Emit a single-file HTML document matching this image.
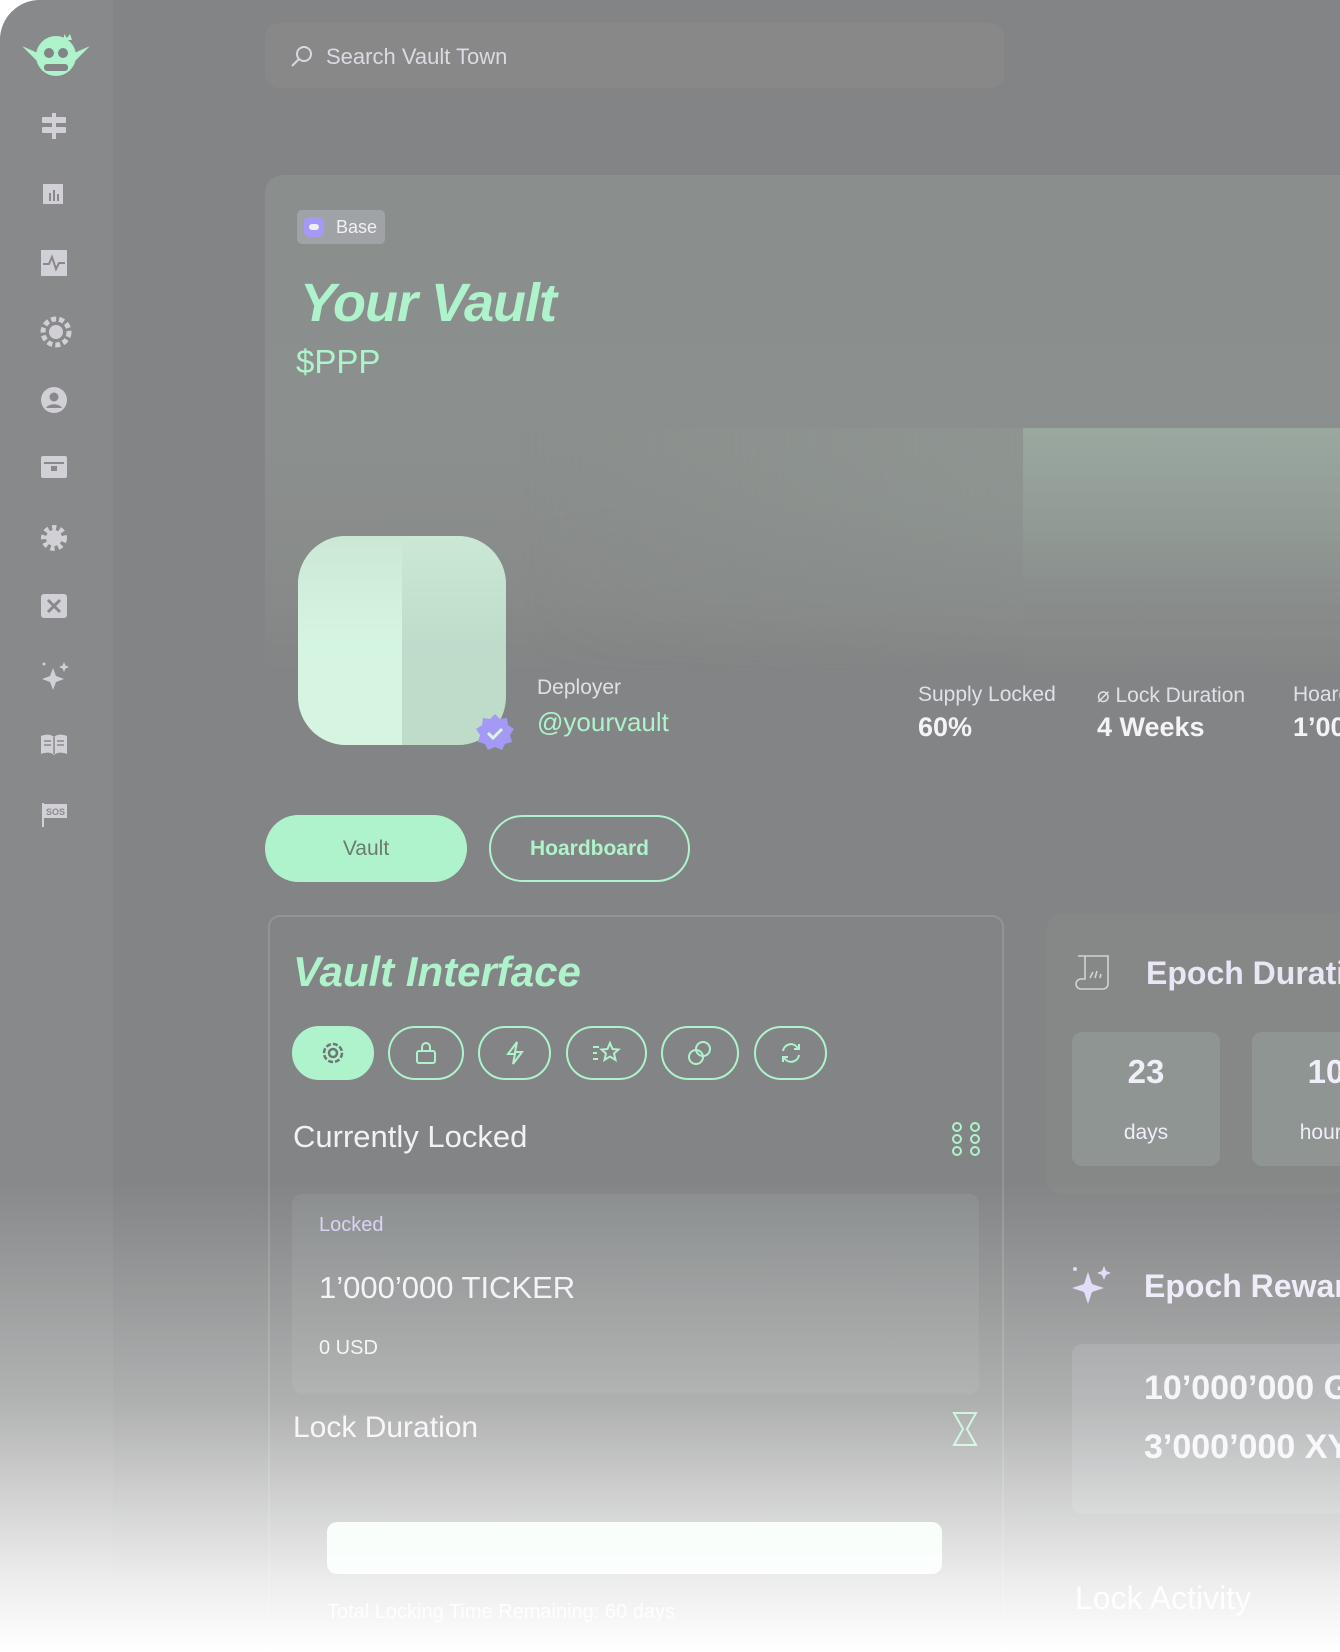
<!DOCTYPE html>
<html><head><meta charset="utf-8"><style>
*{margin:0;padding:0;box-sizing:border-box}
body{width:1340px;height:1652px;overflow:hidden;background:#fff;font-family:"Liberation Sans",sans-serif;position:relative}
.page{position:absolute;left:0;top:0;width:1340px;height:1652px;background:#838485;border-radius:40px 0 0 0;overflow:hidden}
.side{position:absolute;left:0;top:0;width:113px;height:1652px;background:#88898a}
.abs{position:absolute;white-space:nowrap}
.g{color:#aef3cb}
.w{color:#e4e4ec}
.pill{position:absolute;top:1026px;height:54px;border:2px solid #aef3cb;border-radius:27px;display:flex;align-items:center;justify-content:center}
.side svg{position:absolute;left:40px}
.fade{position:absolute;left:0;top:0;width:1340px;height:1652px;background:linear-gradient(to bottom,rgba(255,255,255,0) 0,rgba(255,255,255,0) 1180px,rgba(255,255,255,.35) 1400px,rgba(255,255,255,.85) 1580px,#fff 1652px)}
</style></head><body>
<div class="page">
<div class="side">
<svg style="left:20px;top:26px" width="72" height="54" viewBox="0 0 72 54"><path d="M2 20 L20 28 L22 40 Z M70 20 L52 28 L50 40 Z" fill="#aef3cb"/><circle cx="36" cy="30" r="20" fill="#aef3cb"/><circle cx="29" cy="27" r="5" fill="#838485"/><circle cx="43" cy="27" r="5" fill="#838485"/><rect x="24" y="38" width="24" height="7" rx="3" fill="#838485"/><path d="M44 8 l3 4 3-4 2 6h-8z" fill="#aef3cb"/></svg>
<svg style="top:112px" width="28" height="28" viewBox="0 0 28 28" fill="#d0d0d6"><rect x="2" y="5" width="24" height="6" rx="1"/><rect x="2" y="15" width="24" height="6" rx="1"/><rect x="12" y="1" width="4" height="26"/></svg>
<svg style="top:181px" width="28" height="28" viewBox="0 0 28 28" fill="#d0d0d6"><path d="M3 3h20v20H3z"/><rect x="9" y="12" width="2" height="8" fill="#88898a"/><rect x="13" y="9" width="2" height="11" fill="#88898a"/><rect x="17" y="13" width="2" height="7" fill="#88898a"/></svg>
<svg style="top:249px" width="28" height="28" viewBox="0 0 28 28"><rect x="1" y="1" width="26" height="26" fill="#d0d0d6"/><path d="M3 15h6l3-7 4 12 3-6h6" stroke="#88898a" stroke-width="2" fill="none"/></svg>
<svg style="top:316px" width="32" height="32" viewBox="0 0 32 32"><circle cx="16" cy="16" r="13" fill="none" stroke="#d0d0d6" stroke-width="5" stroke-dasharray="5 3"/><circle cx="16" cy="16" r="7" fill="#d0d0d6"/></svg>
<svg style="top:386px" width="28" height="28" viewBox="0 0 28 28"><circle cx="14" cy="14" r="13" fill="#d0d0d6"/><circle cx="14" cy="11" r="4.5" fill="#88898a"/><path d="M6 22c3-5 13-5 16 0" fill="#88898a"/></svg>
<svg style="top:454px" width="28" height="26" viewBox="0 0 28 26"><rect x="1" y="2" width="26" height="22" rx="2" fill="#d0d0d6"/><rect x="4" y="8" width="20" height="2" fill="#88898a"/><rect x="11" y="12" width="6" height="5" fill="#88898a"/></svg>
<svg style="top:524px" width="28" height="28" viewBox="0 0 28 28"><circle cx="14" cy="14" r="10" fill="none" stroke="#d0d0d6" stroke-width="6" stroke-dasharray="4 3.5"/><circle cx="14" cy="14" r="8" fill="#d0d0d6"/></svg>
<svg style="top:592px" width="28" height="28" viewBox="0 0 28 28"><rect x="1" y="2" width="26" height="24" rx="3" fill="#d0d0d6"/><path d="M8 8l12 12M20 8L8 20" stroke="#88898a" stroke-width="3"/></svg>
<svg style="top:660px" width="30" height="30" viewBox="0 0 30 30" fill="#d0d0d6"><path d="M13 8l3 8 8 3-8 3-3 8-3-8-8-3 8-3z"/><path d="M24 2l1.5 3.5L29 7l-3.5 1.5L24 12l-1.5-3.5L19 7l3.5-1.5z"/><circle cx="4" cy="4" r="1.5"/></svg>
<svg style="top:733px" width="28" height="24" viewBox="0 0 28 24"><path d="M1 3c5-2 10-2 13 1 3-3 8-3 13-1v18c-5-2-10-2-13 1-3-3-8-3-13-1z" fill="#d0d0d6"/><path d="M14 4v17M4 8h7M4 12h7M17 8h7M17 12h7" stroke="#88898a" stroke-width="1.5"/></svg>
<svg style="top:800px" width="28" height="28" viewBox="0 0 28 28"><rect x="2" y="3" width="2" height="24" fill="#d0d0d6"/><rect x="3" y="4" width="24" height="14" fill="#d0d0d6"/><text x="6" y="15" font-size="9" font-family="Liberation Sans" font-weight="bold" fill="#88898a">SOS</text></svg>
</div>

<div class="abs" style="left:265px;top:23px;width:739px;height:65px;background:#888889;border-radius:14px"></div>
<svg class="abs" style="left:290px;top:44px" width="24" height="24" viewBox="0 0 24 24"><circle cx="14" cy="10" r="7" fill="none" stroke="#d8d8e0" stroke-width="2"/><path d="M9 15l-7 7" stroke="#d8d8e0" stroke-width="2"/></svg>
<div class="abs w" style="left:326px;top:44px;font-size:22px;color:#dadae2">Search Vault Town</div>

<div class="abs" style="left:265px;top:175px;width:1075px;height:500px;border-radius:18px 0 0 0;background:linear-gradient(180deg,#8a8f8d 0,#8b8f8d 55%,#878a89 85%,#838485 100%)"></div>
<div class="abs" style="left:1023px;top:428px;width:317px;height:245px;background:linear-gradient(180deg,#9aa8a0 0,#929c96 35%,#888b8a 75%,rgba(131,132,133,0) 100%)"></div>
<div class="abs" style="left:520px;top:428px;width:503px;height:245px;background:linear-gradient(90deg,rgba(146,156,150,0) 0,rgba(146,156,150,.5) 100%);-webkit-mask:linear-gradient(180deg,#000 0,#000 30%,transparent 100%);mask:linear-gradient(180deg,#000 0,#000 30%,transparent 100%)"></div>

<div class="abs" style="left:297px;top:210px;width:88px;height:34px;background:#a0a3a6;border-radius:5px"></div>
<div class="abs" style="left:304px;top:217px;width:20px;height:20px;background:#a49af5;border-radius:5px"></div>
<div class="abs" style="left:309px;top:224px;width:10px;height:6px;background:#eee;border-radius:3px"></div>
<div class="abs" style="left:336px;top:217px;font-size:18px;color:#f0f0f4">Base</div>
<div class="abs g" style="left:300px;top:272px;font-size:54px;font-weight:bold;font-style:italic;letter-spacing:-1px">Your Vault</div>
<div class="abs g" style="left:296px;top:343px;font-size:33px">$PPP</div>

<div class="abs" style="left:298px;top:536px;width:208px;height:209px;border-radius:48px;background:linear-gradient(90deg,#d5f5e2 0,#d5f5e2 50%,#bfdccb 50%,#bfdccb 100%)"></div>
<div class="abs" style="left:298px;top:536px;width:208px;height:110px;border-radius:48px 48px 0 0;background:linear-gradient(180deg,#cbe8d6,rgba(203,232,214,0))"></div>
<svg class="abs" style="left:474px;top:712px" width="42" height="42" viewBox="0 0 42 42"><path d="M21 2l5 5 7-1 1 7 6 4-4 6 2 7-7 2-3 6-7-3-7 3-3-6-7-2 2-7-4-6 6-4 1-7 7 1z" fill="#a49af5"/><path d="M14 21l5 5 9-9" stroke="#d8f5e6" stroke-width="3" fill="none"/></svg>
<div class="abs" style="left:537px;top:676px;font-size:21px;color:#e0e0e8">Deployer</div>
<div class="abs g" style="left:537px;top:707px;font-size:26px">@yourvault</div>
<div class="abs" style="left:918px;top:683px;font-size:21px;color:#e0e0e8">Supply Locked</div>
<div class="abs" style="left:918px;top:712px;font-size:27px;color:#f4f4f8;font-weight:bold">60%</div>
<div class="abs" style="left:1097px;top:683px;font-size:21px;color:#e0e0e8">⌀ Lock Duration</div>
<div class="abs" style="left:1097px;top:712px;font-size:27px;color:#f4f4f8;font-weight:bold">4 Weeks</div>
<div class="abs" style="left:1293px;top:683px;font-size:21px;color:#e0e0e8">Hoard</div>
<div class="abs" style="left:1293px;top:712px;font-size:27px;color:#f4f4f8;font-weight:bold">1’000</div>

<div class="abs" style="left:265px;top:815px;width:202px;height:67px;border-radius:34px;background:#aef3cb;color:#6d7a74;font-size:21px;display:flex;align-items:center;justify-content:center">Vault</div>
<div class="abs g" style="left:489px;top:815px;width:201px;height:67px;border-radius:34px;border:2px solid #aef3cb;font-size:21px;display:flex;align-items:center;justify-content:center;font-weight:bold">Hoardboard</div>

<div class="abs" style="left:268px;top:915px;width:736px;height:760px;border:2px solid #8f9793;border-radius:12px"></div>
<div class="abs g" style="left:293px;top:948px;font-size:42px;font-weight:bold;font-style:italic">Vault Interface</div>
<div class="pill" style="left:292px;width:82px;background:#aef3cb"><svg width="28" height="28" viewBox="0 0 28 28"><circle cx="14" cy="14" r="9" fill="none" stroke="#6e7572" stroke-width="2.5" stroke-dasharray="5 2"/><circle cx="14" cy="14" r="4" fill="none" stroke="#6e7572" stroke-width="2.5"/></svg></div>
<div class="pill" style="left:388px;width:76px"><svg width="26" height="26" viewBox="0 0 26 26" fill="none" stroke="#aef3cb" stroke-width="2"><rect x="4" y="11" width="18" height="12" rx="2"/><path d="M9 11V7a4 4 0 018 0v4"/></svg></div>
<div class="pill" style="left:478px;width:73px"><svg width="26" height="26" viewBox="0 0 26 26" fill="none" stroke="#aef3cb" stroke-width="2"><path d="M15 2L6 14h7l-2 10 9-12h-7z"/></svg></div>
<div class="pill" style="left:566px;width:81px"><svg width="32" height="26" viewBox="0 0 32 26" fill="none" stroke="#aef3cb" stroke-width="2"><path d="M19 3l2.5 6 6 .5-4.5 4 1.5 6.5-5.5-3.5-5.5 3.5 1.5-6.5-4.5-4 6-.5z"/><path d="M2 7h6M2 13h4M2 19h5"/></svg></div>
<div class="pill" style="left:661px;width:78px"><svg width="28" height="28" viewBox="0 0 28 28" fill="none" stroke="#aef3cb" stroke-width="2"><circle cx="17" cy="10" r="7"/><circle cx="10" cy="18" r="7"/></svg></div>
<div class="pill" style="left:754px;width:73px"><svg width="26" height="26" viewBox="0 0 26 26" fill="none" stroke="#aef3cb" stroke-width="2"><path d="M5 11a8 8 0 0114-4l2 2M21 4v5h-5M21 15a8 8 0 01-14 4l-2-2M5 22v-5h5"/></svg></div>

<div class="abs" style="left:293px;top:1119px;font-size:31px;color:#f2f2f6">Currently Locked</div>
<svg class="abs" style="left:951px;top:1121px" width="30" height="36" viewBox="0 0 30 36" fill="none" stroke="#aef3cb" stroke-width="2"><circle cx="6" cy="6" r="4"/><circle cx="6" cy="18" r="4"/><circle cx="6" cy="30" r="4"/><circle cx="24" cy="6" r="4"/><circle cx="24" cy="18" r="4"/><circle cx="24" cy="30" r="4"/></svg>
<div class="abs" style="left:292px;top:1194px;width:687px;height:200px;border-radius:10px;background:#8a8d8d"></div>
<div class="abs" style="left:319px;top:1214px;font-size:20px;color:#d7cff7">Locked</div>
<div class="abs" style="left:319px;top:1270px;font-size:31px;color:#f2f2f6">1’000’000 TICKER</div>
<div class="abs" style="left:319px;top:1337px;font-size:20px;color:#f2f2f6">0 USD</div>
<div class="abs" style="left:293px;top:1411px;font-size:30px;color:#f2f2f6">Lock Duration</div>
<svg class="abs" style="left:951px;top:1411px" width="28" height="36" viewBox="0 0 28 36"><path d="M3 2h22l-9 16 9 16H3l9-16z" fill="none" stroke="#aef3cb" stroke-width="2"/></svg>
<div class="abs" style="left:327px;top:1522px;width:615px;height:52px;border-radius:10px;background:#e8faef"></div>
<div class="abs" style="left:327px;top:1601px;font-size:20px;color:#f8f8fa">Total Locking Time Remaining: 60 days</div>

<div class="abs" style="left:1046px;top:914px;width:300px;height:280px;border-radius:16px 0 0 16px;background:#868888"></div>
<svg class="abs" style="left:1072px;top:950px" width="44" height="44" viewBox="0 0 44 44" fill="none" stroke="#d0d4d2" stroke-width="1.6"><path d="M6 6h30v28a5 5 0 01-5 5H9a5 5 0 010-10h4V6"/><path d="M18 28l3-6M23 28l2-7M28 28l1-4"/></svg>
<div class="abs" style="left:1146px;top:955px;font-size:32px;font-weight:bold;color:#e9e6f6">Epoch Duration</div>
<div class="abs" style="left:1072px;top:1032px;width:148px;height:134px;border-radius:10px;background:#8f9593"></div>
<div class="abs" style="left:1072px;top:1053px;width:148px;text-align:center;font-size:33px;font-weight:bold;color:#f0eef8">23</div>
<div class="abs" style="left:1072px;top:1121px;width:148px;text-align:center;font-size:21px;color:#f0eef8">days</div>
<div class="abs" style="left:1252px;top:1032px;width:148px;height:134px;border-radius:10px;background:#8f9593"></div>
<div class="abs" style="left:1252px;top:1053px;width:148px;text-align:center;font-size:33px;font-weight:bold;color:#f0eef8">10</div>
<div class="abs" style="left:1252px;top:1121px;width:148px;text-align:center;font-size:21px;color:#f0eef8">hours</div>

<svg class="abs" style="left:1070px;top:1264px" width="44" height="44" viewBox="0 0 44 44" fill="#ddd6f8"><path d="M18 8l4 12 12 4-12 4-4 12-4-12-12-4 12-4z"/><path d="M34 2l2 5 5 2-5 2-2 5-2-5-5-2 5-2z"/><circle cx="5" cy="5" r="2"/></svg>
<div class="abs" style="left:1144px;top:1268px;font-size:32px;font-weight:bold;color:#ece9f8">Epoch Rewards</div>
<div class="abs" style="left:1072px;top:1344px;width:300px;height:170px;border-radius:10px;background:#8f9293"></div>
<div class="abs" style="left:1144px;top:1369px;font-size:34px;font-weight:bold;color:#f2f2f6">10’000’000 GRIM</div>
<div class="abs" style="left:1144px;top:1428px;font-size:34px;font-weight:bold;color:#f2f2f6">3’000’000 XYZ</div>
<div class="abs" style="left:1075px;top:1580px;font-size:32px;color:#f6f6f8">Lock Activity</div>

<div class="fade"></div>
</div>
</body></html>
